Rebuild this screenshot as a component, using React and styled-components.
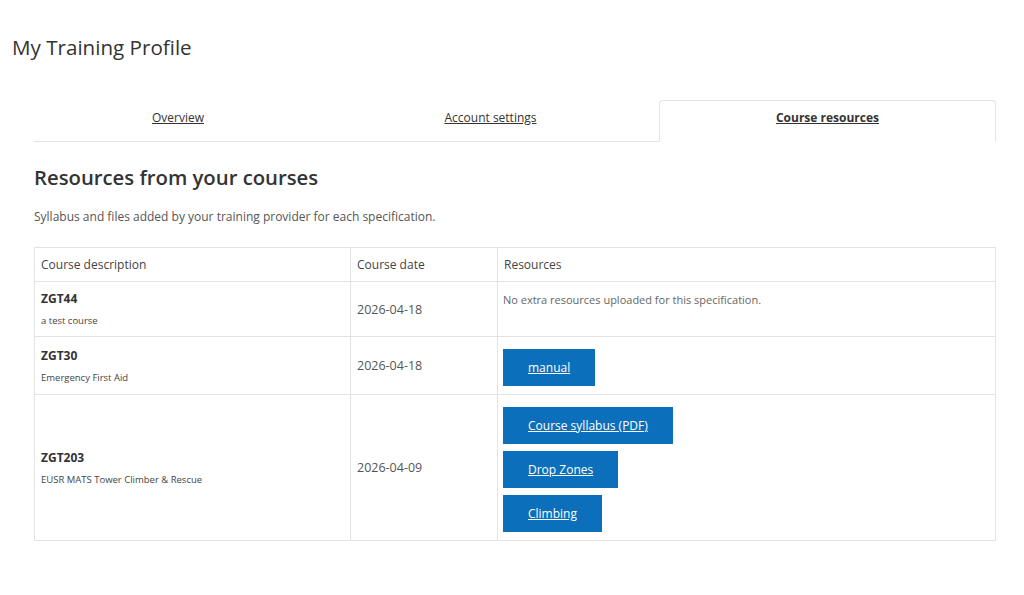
import styled, { createGlobalStyle } from "styled-components"

const GlobalStyle = createGlobalStyle`
  body {
    margin: 0;
    background: #fff;
    font-family: "Open Sans", "Noto Sans", sans-serif;
    color: #333;
  }
`

const courses = [
  { code: 'ZGT44', name: 'a test course', date: '2026-04-18', files: [] },
  { code: 'ZGT30', name: 'Emergency First Aid', date: '2026-04-18', files: ['manual'] },
  { code: 'ZGT203', name: 'EUSR MATS Tower Climber & Rescue', date: '2026-04-09', files: ['Course syllabus (PDF)', 'Drop Zones', 'Climbing'] },
]

const Page = styled.div`
  padding: 32px 28px 40px 12px;
`

const Title = styled.h1`
  margin: 0;
  font-size: 20.6px;
  font-weight: 400;
  color: #333;
  line-height: 30px;
`

const Main = styled.div`
  padding-left: 22px;
`

const Tabs = styled.nav`
  display: grid;
  grid-template-columns: 288px 1fr 1fr;
  margin-top: 38px;
  border-bottom: 1px solid #e3e3e3;
`

const Tab = styled.a`
  display: flex;
  align-items: center;
  justify-content: center;
  height: 42px;
  padding-bottom: 7px;
  box-sizing: border-box;
  margin-bottom: -1px;
  font-size: 12px;
  color: #333;
  text-decoration: underline;
  font-weight: ${p => (p.$active ? 700 : 400)};
  border: 1px solid ${p => (p.$active ? '#e3e3e3' : 'transparent')};
  border-bottom-color: ${p => (p.$active ? '#fff' : 'transparent')};
  border-radius: 4px 4px 0 0;
  background: ${p => (p.$active ? '#fff' : 'transparent')};
`

const Heading = styled.h2`
  margin: 20px 0 0;
  font-size: 20.3px;
  font-weight: 600;
  color: #333;
  line-height: 30px;
`

const Lead = styled.p`
  margin: 16px 0 0;
  font-size: 12px;
  color: #555;
`

const Table = styled.table`
  width: 100%;
  margin-top: 22px;
  border-collapse: collapse;
  font-size: 12px;
`

const Th = styled.th`
  text-align: left;
  font-weight: 400;
  color: #444;
  padding: 8px 6px;
  line-height: 17px;
  border: 1px solid #e3e3e3;
  width: ${p => p.$w || 'auto'};
`

const Td = styled.td`
  border: 1px solid #e3e3e3;
  padding: 8px ${p => (p.$tight ? '5px' : '6px')} 8px;
  vertical-align: ${p => p.$align || 'middle'};
  color: #555;
`

const Code = styled.div`
  font-weight: 700;
  color: #333;
  line-height: 18px;
`

const Name = styled.div`
  margin-top: 6px;
  font-size: 9.5px;
  line-height: 14px;
  color: #444;
`

const DateText = styled.span`
  font-size: 12.5px;
`

const Empty = styled.div`
  padding-top: 2px;
  font-size: 11px;
  color: #666;
`

const Files = styled.div`
  display: flex;
  flex-direction: column;
  align-items: flex-start;
  gap: 7px;
  margin-top: 4px;
`

const FileButton = styled.a`
  display: inline-flex;
  align-items: center;
  height: 37px;
  padding: 0 25px;
  background: #0b6fbc;
  color: #fff;
  font-size: 12px;
  text-decoration: underline;
`

const App = () => {
  return (
    <>
      <GlobalStyle />
      <Page>
        <Title>My Training Profile</Title>
        <Main>
          <Tabs>
            <Tab href="#">Overview</Tab>
            <Tab href="#">Account settings</Tab>
            <Tab href="#" $active>Course resources</Tab>
          </Tabs>
          <Heading>Resources from your courses</Heading>
          <Lead>Syllabus and files added by your training provider for each specification.</Lead>
          <Table>
            <thead>
              <tr>
                <Th $w="303px">Course description</Th>
                <Th $w="134px">Course date</Th>
                <Th>Resources</Th>
              </tr>
            </thead>
            <tbody>
              {courses.map(c => (
                <tr key={c.code}>
                  <Td>
                    <Code>{c.code}</Code>
                    <Name>{c.name}</Name>
                  </Td>
                  <Td><DateText>{c.date}</DateText></Td>
                  <Td $align="top" $tight>
                    {c.files.length === 0 ? (
                      <Empty>No extra resources uploaded for this specification.</Empty>
                    ) : (
                      <Files>
                        {c.files.map(f => <FileButton href="#" key={f}>{f}</FileButton>)}
                      </Files>
                    )}
                  </Td>
                </tr>
              ))}
            </tbody>
          </Table>
        </Main>
      </Page>
    </>
  )
}

export default App
